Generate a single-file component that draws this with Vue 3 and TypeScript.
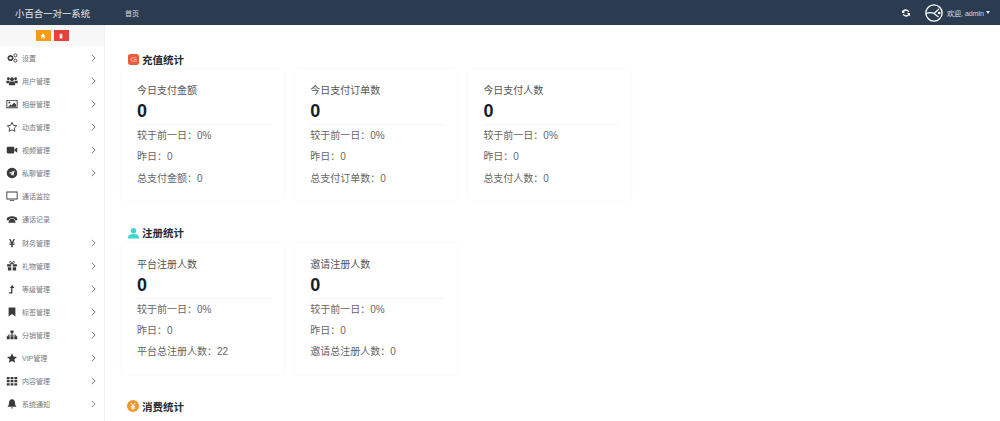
<script setup lang="ts">
interface MenuItem {
  label: string
  icon: string
  arrow: boolean
}
interface Card {
  title: string
  value: string
  lines: string[]
}
interface Section {
  title: string
  kind: string
  cards: Card[]
}

const menu: MenuItem[] = [
  { label: '设置', icon: 'cogs', arrow: true },
  { label: '用户管理', icon: 'users', arrow: true },
  { label: '相册管理', icon: 'image', arrow: true },
  { label: '动态管理', icon: 'star-o', arrow: true },
  { label: '视频管理', icon: 'video', arrow: true },
  { label: '私聊管理', icon: 'send', arrow: true },
  { label: '通话监控', icon: 'monitor', arrow: false },
  { label: '通话记录', icon: 'phone', arrow: false },
  { label: '财务管理', icon: 'yen', arrow: true },
  { label: '礼物管理', icon: 'gift', arrow: true },
  { label: '等级管理', icon: 'level', arrow: true },
  { label: '标签管理', icon: 'bookmark', arrow: true },
  { label: '分销管理', icon: 'sitemap', arrow: true },
  { label: 'VIP管理', icon: 'star', arrow: true },
  { label: '内容管理', icon: 'grid', arrow: true },
  { label: '系统通知', icon: 'bell', arrow: true },
]

const sections: Section[] = [
  {
    title: '充值统计',
    kind: 'pay',
    cards: [
      { title: '今日支付金额', value: '0', lines: ['较于前一日：0%', '昨日：0', '总支付金额：0'] },
      { title: '今日支付订单数', value: '0', lines: ['较于前一日：0%', '昨日：0', '总支付订单数：0'] },
      { title: '今日支付人数', value: '0', lines: ['较于前一日：0%', '昨日：0', '总支付人数：0'] },
    ],
  },
  {
    title: '注册统计',
    kind: 'user',
    cards: [
      { title: '平台注册人数', value: '0', lines: ['较于前一日：0%', '昨日：0', '平台总注册人数：22'] },
      { title: '邀请注册人数', value: '0', lines: ['较于前一日：0%', '昨日：0', '邀请总注册人数：0'] },
    ],
  },
  { title: '消费统计', kind: 'coin', cards: [] },
]
</script>

<template>
  <div class="page">
    <header class="topbar">
      <div class="brand">小百合一对一系统</div>
      <div class="crumb">首页</div>
      <div class="top-right">
        <svg class="refresh" viewBox="0 0 16 16" width="10" height="10">
          <path d="M13.5 6.5A6 6 0 0 0 3 4.500L1.500 3v5h5L4.700 6.200A3.800 3.800 0 0 1 11.200 6.500z" fill="#fff" />
          <path d="M2.500 9.500A6 6 0 0 0 13 11.500l1.500 1.500V8h-5l1.800 1.800A3.800 3.800 0 0 1 4.800 9.500z" fill="#fff" />
        </svg>
        <svg class="avatar" viewBox="0 0 20 20" width="18" height="18">
          <circle cx="10" cy="10" r="9" fill="none" stroke="#fff" stroke-width="1.500" />
          <path d="M1.500 10.500 C5 9 8 9.500 10 10.500 L15.500 5.500 M10 10.500 L15 14.500" fill="none" stroke="#fff" stroke-width="1.300" />
          <circle cx="15.800" cy="10" r="1.500" fill="#fff" />
        </svg>
        <span class="welcome">欢迎, admin</span>
        <span class="caret"></span>
      </div>
    </header>
    <div class="body">
      <aside class="sidebar">
        <div class="quick">
          <span class="quick-btn orange">
            <svg viewBox="0 0 10 10" width="6" height="6"><path d="M5 1 1 5h1.300v4h2V6.500h1.400V9h2V5H9z" fill="#fff" /></svg>
          </span>
          <span class="quick-btn red">
            <svg viewBox="0 0 10 10" width="6" height="6"><path d="M2 2h6v1H2zM2.600 3.800h4.800L7 9H3zM4 1h2v1H4z" fill="#fff" /></svg>
          </span>
        </div>
        <nav class="menu">
          <a v-for="item in menu" :key="item.label" class="menu-item">
            <span class="menu-icon">
              <svg viewBox="0 0 16 16" width="12" height="12" fill="#3a3a3a">
                <template v-if="item.icon === 'cogs'">
                  <path d="M6 4 a4 4 0 1 0 .01 0z M6 6.200a1.800 1.800 0 1 1-.01 0z" fill-rule="evenodd" />
                  <circle cx="12.500" cy="4.500" r="2" fill="none" stroke="#3a3a3a" stroke-width="1.200" />
                  <circle cx="12.500" cy="11.500" r="2" fill="none" stroke="#3a3a3a" stroke-width="1.200" />
                </template>
                <template v-else-if="item.icon === 'users'">
                  <circle cx="3.200" cy="5" r="1.900" />
                  <circle cx="12.800" cy="5" r="1.900" />
                  <circle cx="8" cy="5.500" r="2.500" />
                  <path d="M.5 7.500h4L3.800 11H.5zM15.500 7.500h-4l.7 3.500h3.300zM4.500 8.500h7l.8 5H3.700z" />
                </template>
                <template v-else-if="item.icon === 'image'">
                  <path d="M.5 2.500h15v11H.5zM1.700 3.700v8.600h12.600V3.700z" fill-rule="evenodd" />
                  <circle cx="4.500" cy="6" r="1.300" />
                  <path d="M2.800 11.500 6 8.500l1.500 1.500 3.500-4 2.500 3v2.500z" />
                </template>
                <template v-else-if="item.icon === 'star-o'">
                  <path d="m8 1.800 1.900 4 4.400.6-3.200 3 .8 4.400L8 11.700l-3.900 2.100.8-4.400-3.200-3 4.400-.6z" fill="none" stroke="#3a3a3a" stroke-width="1.200" />
                </template>
                <template v-else-if="item.icon === 'video'">
                  <rect x="1" y="3.500" width="10" height="9" rx="1.500" />
                  <path d="M11.500 7 15 4.500v7L11.500 9z" />
                </template>
                <template v-else-if="item.icon === 'send'">
                  <path d="M8 1a7 7 0 1 0 .01 0zM11.500 4.800 10 11.500 8 10l-1.200 1.300-.3-2.300 3.600-3-4.500 2.600L3.800 8z" fill-rule="evenodd" />
                </template>
                <template v-else-if="item.icon === 'monitor'">
                  <path d="M.5 2h15v10.500H.5zM1.700 3.200v8.100h12.600V3.200zM5 13.500h6V14.700H5z" fill-rule="evenodd" />
                </template>
                <template v-else-if="item.icon === 'phone'">
                  <path d="M1 8C1 3 15 3 15 8v1.500h-3.500V7.800c-1.500-.8-5.500-.8-7 0v1.700H1z" />
                  <path d="M4.500 9.500 6 8h4l1.500 1.500 1.500 3.500H3z" />
                </template>
                <template v-else-if="item.icon === 'yen'">
                  <path d="M4 2.500h1.900L8 6.500l2.100-4H12L9.500 7.500H11.500v1H9v1.300h2.500v1H9V13.500H7v-2.700H4.500v-1H7V8.500H4.500v-1h2z" />
                </template>
                <template v-else-if="item.icon === 'gift'">
                  <path d="M1.500 5.500h5.500v3H1.500zM9 5.500h5.500v3H9zM2.500 9.500H7V14H2.500zM9 9.500h4.500V14H9z" />
                  <path d="M8 5C5 5 3.500 2 6 2c1 0 2 1.500 2 3 0-1.500 1-3 2-3 2.500 0 1 3-2 3z" fill="none" stroke="#3a3a3a" stroke-width="1.200" />
                </template>
                <template v-else-if="item.icon === 'level'">
                  <path d="M4 14h4.500V6.500H11L8.500 2.500 5 6.500h1.800v5.800H4z" />
                </template>
                <template v-else-if="item.icon === 'bookmark'">
                  <path d="M3.500 2h9v12L8 10.500 3.500 14z" />
                </template>
                <template v-else-if="item.icon === 'sitemap'">
                  <path d="M6 2h4v3.500H8.600V7.500h4.900v2h1.500v4h-4v-4h1.500V8.500H8.600v1h1.400v4H6v-4h1.400v-1H3.500v1H5v4H1v-4h1.500v-2h4.900V5.500H6z" />
                </template>
                <template v-else-if="item.icon === 'star'">
                  <path d="m8 1.500 2 4.400 4.700.6-3.500 3.200.9 4.700L8 12.100l-4.100 2.300.9-4.700L1.300 6.500 6 5.900z" />
                </template>
                <template v-else-if="item.icon === 'grid'">
                  <path d="M1 2.500h3.800v3H1zM6.100 2.500h3.800v3H6.100zM11.200 2.500H15v3h-3.800zM1 6.700h3.800v3H1zM6.100 6.700h3.800v3H6.100zM11.200 6.700H15v3h-3.800zM1 10.900h3.800v3H1zM6.100 10.900h3.800v3H6.100zM11.200 10.900H15v3h-3.800z" />
                </template>
                <template v-else-if="item.icon === 'bell'">
                  <path d="M8 1.500c-3 0-4 2.500-4 5 0 2.500-1 3.500-2 5h12c-1-1.500-2-2.500-2-5 0-2.500-1-5-4-5zM6.500 12.500h3A1.500 1.500 0 0 1 6.500 12.500z" />
                </template>
              </svg>
            </span>
            <span class="menu-label">{{ item.label }}</span>
            <svg v-if="item.arrow" class="menu-arrow" viewBox="0 0 6 10" width="5" height="8">
              <path d="M1 1l4 4-4 4" fill="none" stroke="#777" stroke-width="1.200" />
            </svg>
          </a>
        </nav>
      </aside>
      <main class="main">
        <section v-for="section in sections" :key="section.title" class="section">
          <h3 class="section-title">
            <span class="section-icon">
              <svg v-if="section.kind === 'pay'" viewBox="0 0 12 12" width="11" height="11">
                <rect width="12" height="12" rx="3" fill="#ee5a3c" />
                <path d="M9 4.200H5a1.800 1.800 0 0 0 0 3.600h4V6H6.500" fill="none" stroke="#f9b8a4" stroke-width="1" />
              </svg>
              <svg v-else-if="section.kind === 'user'" viewBox="0 0 12 12" width="11" height="12">
                <circle cx="6" cy="3.500" r="3" fill="#3fd6d2" />
                <path d="M0 12c0-4 2-5 6-5s6 1 6 5z" fill="#3fd6d2" />
              </svg>
              <svg v-else viewBox="0 0 12 12" width="12" height="12">
                <circle cx="6" cy="6" r="6" fill="#f0982f" />
                <path d="M3.800 2.800 6 5.800l2.200-3M3.800 6.300h4.400M3.800 8h4.400M6 5.800v4" fill="none" stroke="#fff" stroke-width="1" />
              </svg>
            </span>
            {{ section.title }}
          </h3>
          <div v-if="section.cards.length" class="cards">
            <div v-for="card in section.cards" :key="card.title" class="card">
              <div class="card-title">{{ card.title }}</div>
              <div class="card-value">{{ card.value }}</div>
              <div class="card-lines">
                <p v-for="line in card.lines" :key="line">{{ line }}</p>
              </div>
            </div>
          </div>
        </section>
      </main>
    </div>
  </div>
</template>

<style>
html,
body {
  margin: 0;
  overflow: hidden;
}
</style>

<style scoped>
.page {
  width: 1000px;
  height: 421px;
  overflow: hidden;
  background: #fff;
  font-family: "Liberation Sans", "Noto Sans CJK SC", sans-serif;
}

.topbar {
  display: flex;
  align-items: center;
  height: 25px;
  background: #2b3c50;
  color: #fff;
}

.brand {
  width: 125px;
  padding-left: 15px;
  box-sizing: border-box;
  font-size: 9.400px;
  color: #e4e8ec;
}

.crumb {
  font-size: 7px;
  color: #d8dce0;
}

.top-right {
  display: flex;
  align-items: center;
  margin-left: auto;
  padding-right: 10px;
}

.refresh {
  margin-right: 14px;
}

.avatar {
  margin-right: 4px;
}

.welcome {
  font-size: 7px;
  color: #d8dce0;
}

.caret {
  margin-left: 2px;
  border-left: 2.500px solid transparent;
  border-right: 2.500px solid transparent;
  border-top: 3px solid #e6e9ec;
}

.body {
  display: flex;
  height: 396px;
}

.sidebar {
  width: 105px;
  flex: none;
  box-sizing: border-box;
  border-right: 1px solid #f0f0f0;
}

.quick {
  display: flex;
  justify-content: center;
  gap: 3px;
  height: 21px;
  box-sizing: border-box;
  padding-top: 5px;
  background: #f7f7f7;
}

.quick-btn {
  display: flex;
  align-items: center;
  justify-content: center;
  width: 15px;
  height: 11px;
}

.orange {
  background: #f39c12;
}

.red {
  background: #e8413c;
}

.menu {
  display: flex;
  flex-direction: column;
}

.menu-item {
  display: flex;
  align-items: center;
  height: 23.130px;
  padding-left: 6px;
  padding-right: 8px;
  color: #777;
  font-size: 7px;
}

.menu-icon {
  display: flex;
  justify-content: center;
  width: 12px;
}

.menu-label {
  margin-left: 4px;
  flex: 1;
}

.main {
  flex: 1;
  padding: 26px 0 0 17px;
  min-width: 0;
}

.section {
  height: 173.500px;
}

.section-title {
  display: flex;
  align-items: center;
  gap: 3px;
  height: 16px;
  margin: 0 0 3px 5px;
  font-size: 10.500px;
  font-weight: 700;
  color: #222c38;
}

.section-icon {
  display: flex;
  width: 12px;
  justify-content: center;
}

.cards {
  display: flex;
  gap: 11.200px;
}

.card {
  width: 162px;
  height: 130px;
  box-sizing: border-box;
  padding: 14px 12px 0 15px;
  border-radius: 3px;
  box-shadow: 0 0 6px rgba(0, 0, 0, 0.030);
}

.card-title {
  font-size: 10px;
  line-height: 14px;
  color: #555;
}

.card-value {
  margin-top: 3px;
  padding-bottom: 3px;
  border-bottom: 1px solid #f4f4f4;
  font-size: 18px;
  font-weight: 700;
  line-height: 20px;
  color: #16202c;
}

.card-lines p {
  margin: 0;
  height: 21.400px;
  font-size: 10px;
  line-height: 21.400px;
  color: #666;
}
</style>
